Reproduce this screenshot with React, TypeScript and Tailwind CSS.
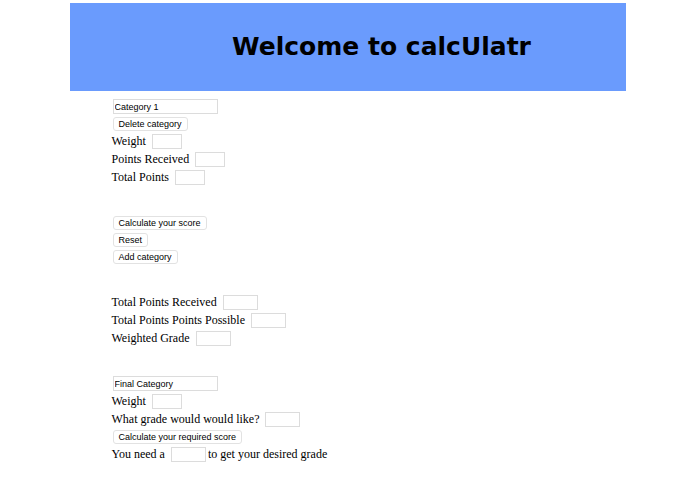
import { useState } from 'react';

interface FieldProps {
  id: string;
  label: string;
  width: string;
  readOnly?: boolean;
}

const inputStyle = 'border border-[#dcdcdc] bg-white font-["Liberation_Sans",sans-serif] text-[9px] outline-none';

function Field({ id, label, width, readOnly }: FieldProps) {
  return (
    <div className="flex h-[18px] items-center">
      <label htmlFor={id}>{label}</label>
      <input id={id} type="text" readOnly={readOnly} className={`ml-1.5 h-[15px] px-px ${width} ${inputStyle}`} />
    </div>
  );
}

function NameField({ label, initial }: { label: string; initial: string }) {
  const [name, setName] = useState(initial);
  return (
    <div className="flex h-[17px] items-center">
      <input
        type="text"
        aria-label={label}
        value={name}
        onChange={(e) => setName(e.target.value)}
        className={`ml-px h-[15px] w-[105px] px-px ${inputStyle}`}
      />
    </div>
  );
}

function ActionButton({ children }: { children: string }) {
  return (
    <div className="flex h-[17px] items-center">
      <button
        type="button"
        className='ml-px h-[14px] rounded-[3px] border border-[#e2e2e2] bg-white px-[5px] font-["Liberation_Sans",sans-serif] text-[9px] leading-[12px]'
      >
        {children}
      </button>
    </div>
  );
}

export default function App() {
  return (
    <div className="min-h-screen bg-white pt-[3px] text-black">
      <div className="mx-auto w-4/5">
        <header className="flex h-[88px] items-center justify-center bg-[#6a9bfd] pl-[68px]">
          <h1 className='font-["DejaVu_Sans",sans-serif] text-[25px] font-bold'>Welcome to calcUlatr</h1>
        </header>

        <main className='flex flex-col gap-7 pt-[7px] pl-[42px] font-["Liberation_Serif",serif] text-[12px] leading-[18px]'>
          <section>
            <NameField label="Category name" initial="Category 1" />
            <ActionButton>Delete category</ActionButton>
            <Field id="weight" label="Weight" width="w-[30px]" />
            <Field id="points-received" label="Points Received" width="w-[30px]" />
            <Field id="total-points" label="Total Points" width="w-[30px]" />
          </section>

          <section>
            <ActionButton>Calculate your score</ActionButton>
            <ActionButton>Reset</ActionButton>
            <ActionButton>Add category</ActionButton>
          </section>

          <section>
            <Field id="total-received" label="Total Points Received" width="w-[35px]" readOnly />
            <Field id="total-possible" label="Total Points Points Possible" width="w-[35px]" readOnly />
            <Field id="weighted-grade" label="Weighted Grade" width="w-[35px]" readOnly />
          </section>

          <section>
            <NameField label="Final category name" initial="Final Category" />
            <Field id="final-weight" label="Weight" width="w-[30px]" />
            <Field id="desired-grade" label="What grade would would like?" width="w-[35px]" />
            <ActionButton>Calculate your required score</ActionButton>
            <div className="flex items-center">
              <Field id="required-score" label="You need a" width="w-[35px]" readOnly />
              <span className="ml-0.5">to get your desired grade</span>
            </div>
          </section>
        </main>
      </div>
    </div>
  );
}
